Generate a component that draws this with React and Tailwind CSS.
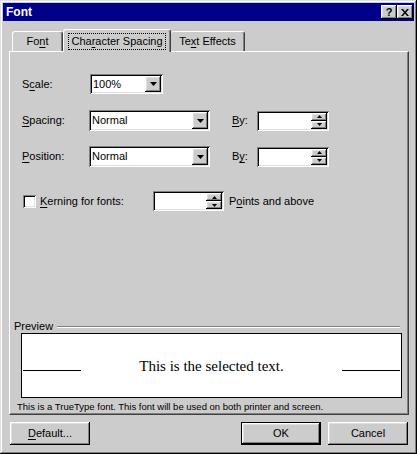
import React from 'react';

const raised = 'shadow-[inset_-1px_-1px_#000,inset_1px_1px_#fff,inset_-2px_-2px_#808080,inset_2px_2px_#dfdfdf]';
const sunken = 'shadow-[inset_1px_1px_#808080,inset_-1px_-1px_#fff,inset_2px_2px_#000,inset_-2px_-2px_#dfdfdf]';

const U = ({ children }) => <span className="underline underline-offset-[2px]">{children}</span>;

const ArrowDown = () => (
    <svg width="7" height="4" viewBox="0 0 7 4"><polygon points="0,0 7,0 3.5,4" fill="#000" /></svg>
);

const SpinArrow = ({ up }) => (
    <svg width="5" height="3" viewBox="0 0 5 3">
        <polygon points={up ? '0,3 5,3 2.5,0' : '0,0 5,0 2.5,3'} fill="#000" />
    </svg>
);

const Combo = ({ value, className }) => (
    <div className={`flex items-stretch bg-white p-[2px] ${sunken} ${className}`}>
        <span className="flex flex-1 items-center pl-[1px]">{value}</span>
        <div className={`flex w-[16px] items-center justify-center bg-[#cccccc] ${raised}`}>
            <ArrowDown />
        </div>
    </div>
);

const Spin = ({ className }) => (
    <div className={`flex items-stretch justify-end bg-white p-[2px] ${sunken} ${className}`}>
        <div className="flex w-[16px] flex-col">
            <div className={`flex flex-1 items-center justify-center bg-[#cccccc] ${raised}`}><SpinArrow up /></div>
            <div className={`flex flex-1 items-center justify-center bg-[#cccccc] ${raised}`}><SpinArrow /></div>
        </div>
    </div>
);

const App = () => {
    return (
        <div className="h-[454px] w-[417px] overflow-hidden bg-[#cccccc] p-[3px] text-[11px] leading-[13px] text-black shadow-[inset_-1px_-1px_#000,inset_1px_1px_#dfdfdf,inset_-2px_-2px_#808080,inset_2px_2px_#fff]" style={{ fontFamily: '"Liberation Sans", Arial, sans-serif' }}>
            {/* Title bar */}
            <div className="flex h-[18px] items-center bg-[#000088] pl-[3px] pr-[1px]">
                <span className="flex-1 text-[12px] font-bold text-white">Font</span>
                <div className={`flex h-[14px] w-[16px] items-center justify-center bg-[#cccccc] text-[11px] font-bold ${raised}`}>?</div>
                <div className={`flex h-[14px] w-[16px] items-center justify-center bg-[#cccccc] ${raised}`}>
                    <svg width="8" height="7" viewBox="0 0 8 7">
                        <path d="M0 0h2l2 2.5L6 0h2L5 3.5 8 7H6L4 4.5 2 7H0l3-3.5z" fill="#000" />
                    </svg>
                </div>
            </div>

            <div className="px-[6px]">
                {/* Tabs */}
                <div className="mt-[8px] flex h-[22px] items-end pl-[3px]">
                    <div className="flex h-[20px] w-[51px] items-center justify-center rounded-t-[3px] border-l border-t border-r border-l-white border-t-white border-r-[#404040] shadow-[inset_-1px_0_#808080]">
                        Fo<U>n</U>t
                    </div>
                    <div className="relative z-10 -mb-px flex h-[23px] w-[108px] items-center justify-center rounded-t-[3px] border-l border-t border-r border-l-white border-t-white border-r-[#404040] bg-[#cccccc] shadow-[inset_-1px_0_#808080]">
                        <span className="px-[2px] py-[1px] outline-1 outline-dotted outline-black">
                            Cha<U>r</U>acter Spacing
                        </span>
                    </div>
                    <div className="flex h-[20px] w-[74px] items-center justify-center rounded-t-[3px] border-t border-r border-t-white border-r-[#404040] shadow-[inset_-1px_0_#808080]">
                        Te<U>x</U>t Effects
                    </div>
                </div>

                {/* Panel */}
                <div className="flex h-[364px] w-[400px] flex-col border border-l-white border-t-white border-r-[#404040] border-b-[#404040] shadow-[inset_-1px_-1px_#808080]">
                    <div className="pl-[12px] pt-[22px]">
                        <div className="flex h-[20px] items-center">
                            <span className="w-[68px]">S<U>c</U>ale:</span>
                            <Combo value="100%" className="h-[20px] w-[73px]" />
                        </div>
                        <div className="mt-[16px] flex h-[21px] items-center">
                            <span className="w-[67px]"><U>S</U>pacing:</span>
                            <Combo value="Normal" className="h-[21px] w-[121px]" />
                            <span className="ml-[22px] w-[25px]"><U>B</U>y:</span>
                            <Spin className="h-[20px] w-[72px]" />
                        </div>
                        <div className="mt-[15px] flex h-[21px] items-center">
                            <span className="w-[67px]"><U>P</U>osition:</span>
                            <Combo value="Normal" className="h-[21px] w-[121px]" />
                            <span className="ml-[22px] w-[25px]">B<U>y</U>:</span>
                            <Spin className="h-[20px] w-[72px]" />
                        </div>
                        <div className="mt-[24px] flex h-[20px] items-center">
                            <div className={`ml-[1px] h-[13px] w-[13px] bg-white ${sunken}`} />
                            <span className="ml-[4px] w-[113px]"><U>K</U>erning for fonts:</span>
                            <Spin className="h-[20px] w-[71px]" />
                            <span className="ml-[5px]">P<U>o</U>ints and above</span>
                        </div>
                    </div>

                    {/* Preview */}
                    <div className="mt-auto pb-[1px]">
                        <div className="flex h-[13px] items-center pl-[4px]">
                            <span>Preview</span>
                            <div className="ml-[4px] mr-[8px] h-[2px] flex-1 border-t border-b border-t-[#808080] border-b-white" />
                        </div>
                        <div className="ml-[11px] mr-[6px] flex h-[65px] items-center border border-black bg-white">
                            <div className="flex flex-1 items-baseline">
                                <div className="ml-[1px] h-[10px] w-[58px] border-b border-black" />
                                <span className="flex-1 text-center text-[15px] leading-[18px]" style={{ fontFamily: '"Liberation Serif", "Times New Roman", serif' }}>
                                    This is the selected text.
                                </span>
                                <div className="mr-[1px] h-[10px] w-[58px] border-b border-black" />
                            </div>
                        </div>
                        <div className="ml-[7px] mt-[2px] h-[13px] text-[9.5px] leading-[13px]">
                            This is a TrueType font. This font will be used on both printer and screen.
                        </div>
                    </div>
                </div>

                {/* Buttons */}
                <div className="mt-[7px] flex items-center">
                    <div className={`ml-[1px] flex h-[23px] w-[80px] items-center justify-center ${raised}`}>
                        <U>D</U>efault...
                    </div>
                    <div className="ml-auto flex h-[23px] w-[80px] border border-black">
                        <div className={`flex flex-1 items-center justify-center ${raised}`}>OK</div>
                    </div>
                    <div className={`ml-[7px] flex h-[23px] w-[80px] items-center justify-center ${raised}`}>
                        Cancel
                    </div>
                </div>
            </div>
        </div>
    );
};

export default App;
